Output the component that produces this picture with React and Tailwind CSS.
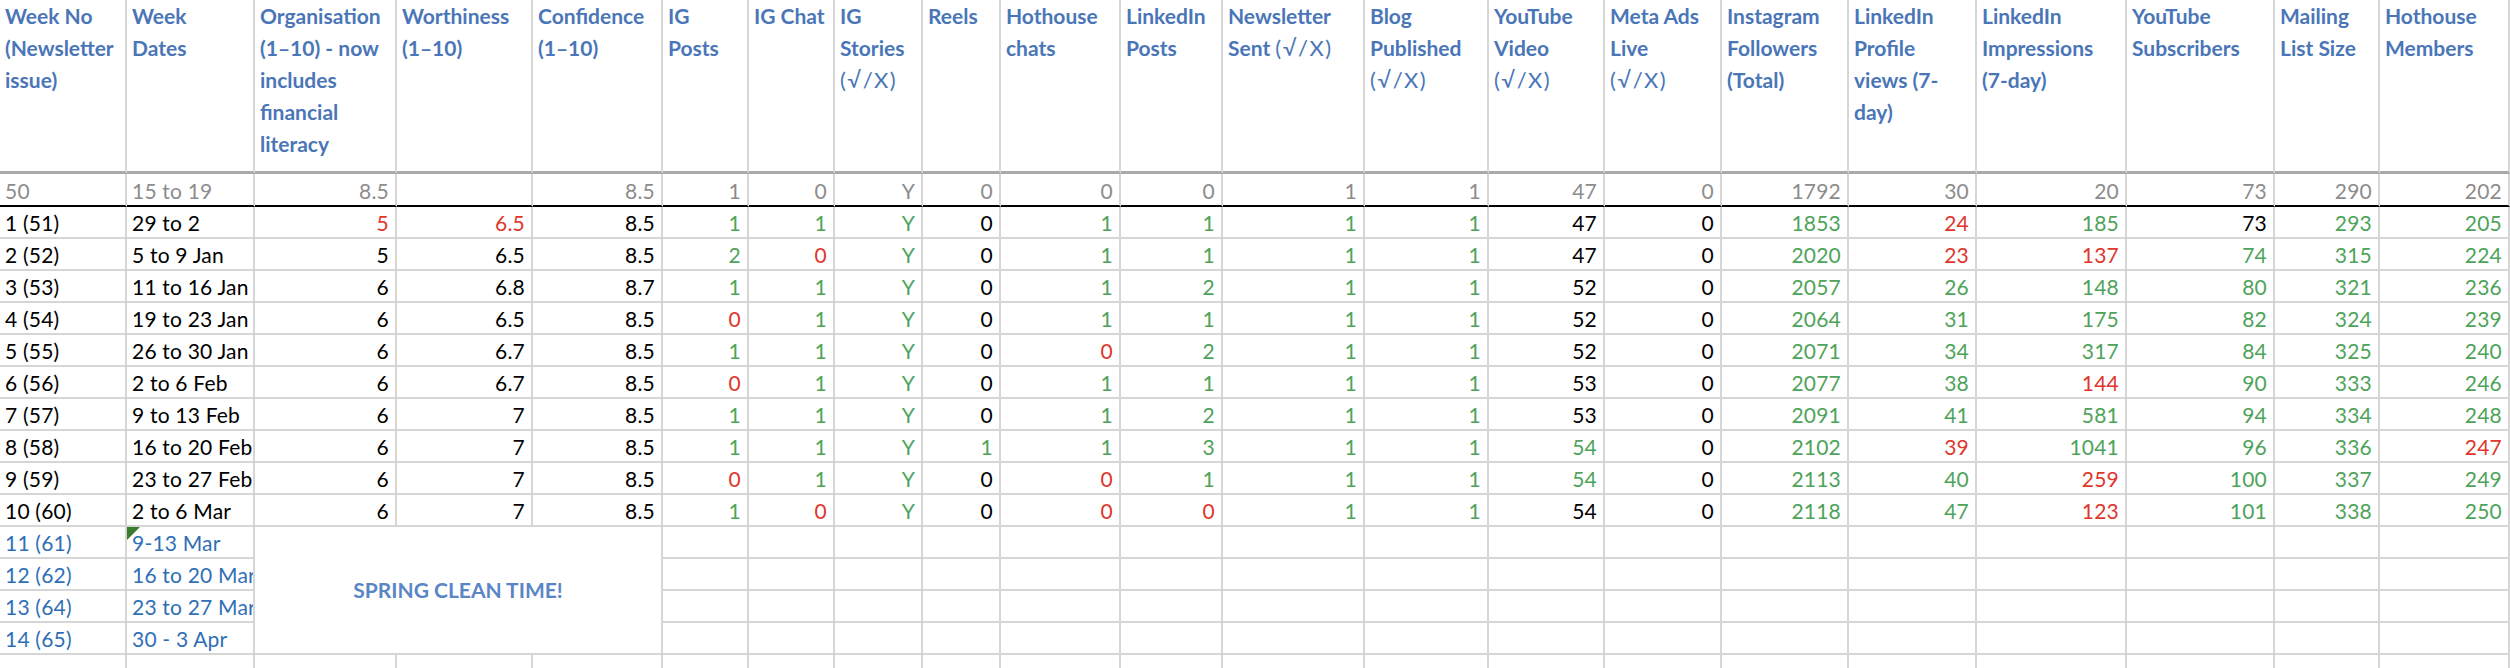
import React from 'react';

const MARK = '(√/X)';

const headers = [
  ['Week No', '(Newsletter', 'issue)'],
  ['Week', 'Dates'],
  ['Organisation', '(1–10) - now', 'includes', 'financial', 'literacy'],
  ['Worthiness', '(1–10)'],
  ['Confidence', '(1–10)'],
  ['IG', 'Posts'],
  ['IG Chat'],
  ['IG', 'Stories', MARK],
  ['Reels'],
  ['Hothouse', 'chats'],
  ['LinkedIn', 'Posts'],
  ['Newsletter', 'Sent ' + MARK],
  ['Blog', 'Published', MARK],
  ['YouTube', 'Video', MARK],
  ['Meta Ads', 'Live', MARK],
  ['Instagram', 'Followers', '(Total)'],
  ['LinkedIn', 'Profile', 'views (7-', 'day)'],
  ['LinkedIn', 'Impressions', '(7-day)'],
  ['YouTube', 'Subscribers'],
  ['Mailing', 'List Size'],
  ['Hothouse', 'Members'],
];

const baseline = ['50', '15 to 19', '8.5', '', '8.5', '1', '0', 'Y', '0', '0', '0', '1', '1', '47', '0', '1792', '30', '20', '73', '290', '202'];

// each cell: "value:colour" where colour is k (black), g (green), r (red)
const rows = [
  '1 (51):k|29 to 2:k|5:r|6.5:r|8.5:k|1:g|1:g|Y:g|0:k|1:g|1:g|1:g|1:g|47:k|0:k|1853:g|24:r|185:g|73:k|293:g|205:g',
  '2 (52):k|5 to 9 Jan:k|5:k|6.5:k|8.5:k|2:g|0:r|Y:g|0:k|1:g|1:g|1:g|1:g|47:k|0:k|2020:g|23:r|137:r|74:g|315:g|224:g',
  '3 (53):k|11 to 16 Jan:k|6:k|6.8:k|8.7:k|1:g|1:g|Y:g|0:k|1:g|2:g|1:g|1:g|52:k|0:k|2057:g|26:g|148:g|80:g|321:g|236:g',
  '4 (54):k|19 to 23 Jan:k|6:k|6.5:k|8.5:k|0:r|1:g|Y:g|0:k|1:g|1:g|1:g|1:g|52:k|0:k|2064:g|31:g|175:g|82:g|324:g|239:g',
  '5 (55):k|26 to 30 Jan:k|6:k|6.7:k|8.5:k|1:g|1:g|Y:g|0:k|0:r|2:g|1:g|1:g|52:k|0:k|2071:g|34:g|317:g|84:g|325:g|240:g',
  '6 (56):k|2 to 6 Feb:k|6:k|6.7:k|8.5:k|0:r|1:g|Y:g|0:k|1:g|1:g|1:g|1:g|53:k|0:k|2077:g|38:g|144:r|90:g|333:g|246:g',
  '7 (57):k|9 to 13 Feb:k|6:k|7:k|8.5:k|1:g|1:g|Y:g|0:k|1:g|2:g|1:g|1:g|53:k|0:k|2091:g|41:g|581:g|94:g|334:g|248:g',
  '8 (58):k|16 to 20 Feb:k|6:k|7:k|8.5:k|1:g|1:g|Y:g|1:g|1:g|3:g|1:g|1:g|54:g|0:k|2102:g|39:r|1041:g|96:g|336:g|247:r',
  '9 (59):k|23 to 27 Feb:k|6:k|7:k|8.5:k|0:r|1:g|Y:g|0:k|0:r|1:g|1:g|1:g|54:g|0:k|2113:g|40:g|259:r|100:g|337:g|249:g',
  '10 (60):k|2 to 6 Mar:k|6:k|7:k|8.5:k|1:g|0:r|Y:g|0:k|0:r|0:r|1:g|1:g|54:k|0:k|2118:g|47:g|123:r|101:g|338:g|250:g',
];

const upcoming = [
  ['11 (61)', '9-13 Mar'],
  ['12 (62)', '16 to 20 Mar'],
  ['13 (64)', '23 to 27 Mar'],
  ['14 (65)', '30 - 3 Apr'],
];

const colour = { k: 'text-black', g: 'text-[#4ea35a]', r: 'text-[#e0362c]' };

const cellBase = 'border-r-2 border-b-2 border-[#d6d6d6] overflow-hidden whitespace-nowrap';

const HeaderLine = ({ text }) => {
  if (!text.includes(MARK)) return <div>{text}</div>;
  const before = text.replace(MARK, '');
  return (
    <div>
      {before}
      <span className="font-normal text-[22px] tracking-[1.5px]">{MARK}</span>
    </div>
  );
};

const DataCell = ({ value, col, tone }) => (
  <div
    className={`${cellBase} flex items-center pt-[2px] ${col < 2 ? 'justify-start pl-[5px]' : 'justify-end pr-[6px]'} ${tone}`}
  >
    {value}
  </div>
);

export default function App() {
  return (
    <div className="w-[2510px] h-[668px] overflow-hidden bg-white font-['Lato',sans-serif] text-[21px] tracking-[0.2px]">
      <div className="grid grid-cols-[127px_128px_142px_136px_130px_86px_86px_88px_78px_120px_102px_142px_124px_116px_117px_127px_128px_150px_148px_105px_130px] grid-rows-[174px_33px_repeat(15,32px)]">
        {/* Header */}
        {headers.map((lines, i) => (
          <div
            key={`h-${i}`}
            className="border-r-2 border-r-[#d6d6d6] border-b-[3px] border-b-[#a9a9a9] px-[5px] leading-[32px] font-bold tracking-normal text-[#4a76b8] whitespace-nowrap overflow-hidden"
          >
            {lines.map((line, j) => (
              <HeaderLine key={j} text={line} />
            ))}
          </div>
        ))}

        {/* Previous week baseline */}
        {baseline.map((v, i) => (
          <div
            key={`b-${i}`}
            className={`border-r-2 border-r-[#d6d6d6] border-b-2 border-b-black flex items-center pt-[2px] whitespace-nowrap text-[#8c8c8c] ${i < 2 ? 'justify-start pl-[5px]' : 'justify-end pr-[6px]'}`}
          >
            {v}
          </div>
        ))}

        {/* Logged weeks */}
        {rows.map((row, r) =>
          row.split('|').map((cell, c) => {
            const idx = cell.lastIndexOf(':');
            const value = cell.slice(0, idx);
            const tone = colour[cell.slice(idx + 1)];
            return <DataCell key={`r-${r}-${c}`} value={value} col={c} tone={tone} />;
          })
        )}

        {/* Upcoming weeks */}
        {upcoming.map(([wk, dates], r) => (
          <React.Fragment key={`u-${r}`}>
            <div className={`${cellBase} flex items-center pt-[2px] pl-[5px] text-[#2f6fb6]`}>{wk}</div>
            <div className={`${cellBase} relative flex items-center pt-[2px] pl-[5px] text-[#2f6fb6]`}>
              {r === 0 && (
                <span className="absolute left-0 top-0 w-0 h-0 border-t-[13px] border-t-[#3b7d2e] border-r-[13px] border-r-transparent" />
              )}
              {dates}
            </div>
            {r === 0 && (
              <div className="col-span-3 row-span-4 border-r-2 border-b-2 border-[#d6d6d6] flex items-center justify-center font-bold tracking-normal text-[#5a86c6]">
                SPRING CLEAN TIME!
              </div>
            )}
            {Array.from({ length: 16 }).map((_, c) => (
              <div key={`u-${r}-${c}`} className={cellBase} />
            ))}
          </React.Fragment>
        ))}

        {/* Empty row */}
        {Array.from({ length: 21 }).map((_, c) => (
          <div key={`e-${c}`} className={cellBase} />
        ))}
      </div>
    </div>
  );
}
